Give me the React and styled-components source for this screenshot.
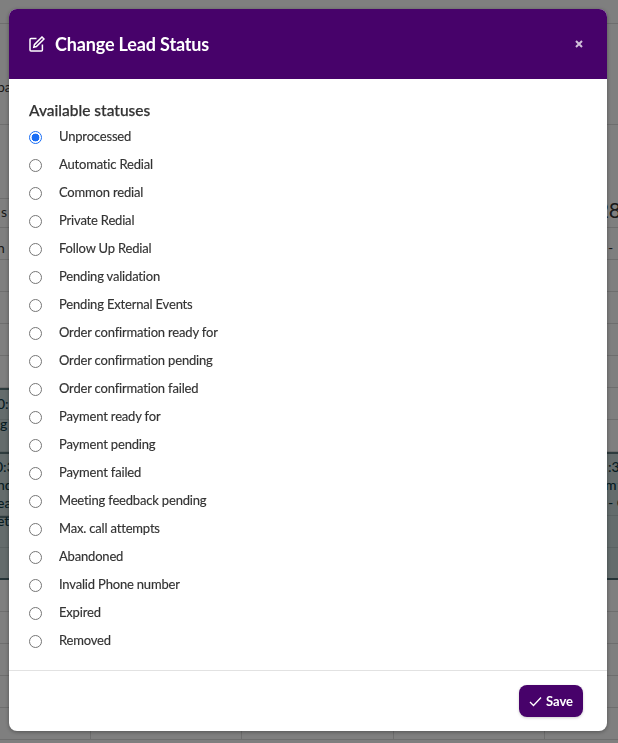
import React from 'react';
import styled, { createGlobalStyle } from 'styled-components';

const GlobalStyle = createGlobalStyle`
    html, body {
        margin: 0;
        padding: 0;
        height: 100%;
        overflow: hidden;
        background: #fff;
        font-family: 'Lato', 'Open Sans', sans-serif;
    }
`;

const statuses = [
    'Unprocessed',
    'Automatic Redial',
    'Common redial',
    'Private Redial',
    'Follow Up Redial',
    'Pending validation',
    'Pending External Events',
    'Order confirmation ready for',
    'Order confirmation pending',
    'Order confirmation failed',
    'Payment ready for',
    'Payment pending',
    'Payment failed',
    'Meeting feedback pending',
    'Max. call attempts',
    'Abandoned',
    'Invalid Phone number',
    'Expired',
    'Removed',
];

const Page = styled.div`
    height: 743px;
    overflow: hidden;
    color: #333;
    font-size: 14px;
`;

const TopRow = styled.div`
    height: ${(p) => p.$h}px;
    box-sizing: border-box;
    border-bottom: ${(p) => (p.$line ? '1px solid #ddd' : 'none')};
    display: flex;
    justify-content: space-between;
`;

const LeftPart = styled.div`
    width: 90px;
    box-sizing: border-box;
    border-bottom: ${(p) => (p.$line ? '1px solid #ddd' : 'none')};
    height: ${(p) => p.$h || 'auto'}${(p) => (p.$h ? 'px' : '')};
    padding-top: ${(p) => p.$top || 0}px;
    line-height: 18px;
`;

const Fragment = styled.div`
    margin-left: ${(p) => p.$shift || 0}px;
`;

const DayNumber = styled.div`
    font-size: 21px;
    line-height: 24px;
    padding-top: 73px;
    margin-right: -3px;
`;

const Calendar = styled.div`
    display: grid;
    grid-template-columns: 91px 151px 152px 151px 1fr;
    grid-auto-rows: 32px;
    border-top: 1px solid #ddd;
`;

const Slot = styled.div`
    box-sizing: border-box;
    border-bottom: 1px solid #ddd;
    border-right: 1px solid #ddd;
    grid-column: ${(p) => p.$col};
    grid-row: ${(p) => p.$row};
`;

const SlotLabel = styled.div`
    grid-column: ${(p) => p.$col};
    grid-row: 1;
    padding: 11px 0 0 ${(p) => p.$pad}px;
    line-height: 18px;
    white-space: nowrap;
`;

const Event = styled.div`
    grid-column: ${(p) => p.$col};
    grid-row: ${(p) => p.$row} / span ${(p) => p.$span};
    box-sizing: border-box;
    background: rgba(125, 165, 165, 0.42);
    border-top: 2px solid #5c787c;
    border-bottom: ${(p) => (p.$closed ? '2px solid #4c6a70' : 'none')};
    color: #0d3a44;
    padding: ${(p) => p.$top ?? 4}px 0 0 ${(p) => p.$pad}px;
    line-height: ${(p) => p.$lh || 18}px;
    white-space: nowrap;
    z-index: 1;
`;

const EventLine = styled.div`
    font-weight: 500;
    margin-left: ${(p) => p.$shift || 0}px;
    margin-top: ${(p) => p.$up || 0}px;
`;

const Backdrop = styled.div`
    position: fixed;
    inset: 0;
    background: rgba(0, 0, 0, 0.5);
    padding: 9px 11px 12px 9px;
    box-sizing: border-box;
    z-index: 2;
`;

const Modal = styled.div`
    height: 722px;
    background: #fff;
    border-radius: 8px;
    overflow: hidden;
    display: flex;
    flex-direction: column;
    box-shadow: 0 1px 4px rgba(0, 0, 0, 0.35);
`;

const Header = styled.div`
    height: 70px;
    flex: none;
    background: #47026a;
    color: #fff;
    display: flex;
    align-items: center;
    padding: 0 20px;
`;

const Title = styled.h5`
    margin: 0 0 0 10px;
    flex: 1;
    font-size: 18px;
    font-weight: 700;
    letter-spacing: -0.15px;
    line-height: 1;
`;

const CloseMark = styled.svg`
    width: 8px;
    height: 8px;
    margin-right: 4px;
    opacity: 0.75;
`;

const Body = styled.div`
    flex: 1;
    padding: 21px 20px 0;
`;

const Heading = styled.div`
    font-size: 15.5px;
    font-weight: 500;
    color: #333;
    line-height: 20px;
    margin-bottom: 3px;
    -webkit-text-stroke: 0.25px #333;
`;

const Option = styled.label`
    height: 28px;
    display: flex;
    align-items: center;
    font-size: 13px;
    letter-spacing: -0.18px;
    color: #333;
    -webkit-text-stroke: 0.15px #333;
`;

const OptionText = styled.span`
    margin-bottom: 2px;
`;

const Radio = styled.input`
    appearance: none;
    width: 13px;
    height: 13px;
    margin: 0 17px 0 0;
    flex: none;
    border-radius: 50%;
    border: 1px solid #767676;
    background: #fff;
    box-sizing: border-box;

    &:checked {
        border: 1px solid #1a6ef5;
        background: radial-gradient(circle, #1a6ef5 0 3.6px, #fff 4.2px);
    }
`;

const Footer = styled.div`
    height: 61px;
    flex: none;
    box-sizing: border-box;
    border-top: 1px solid #e2e2e2;
    display: flex;
    align-items: center;
    justify-content: flex-end;
    padding: 0 24px 0 0;
`;

const SaveButton = styled.button`
    width: 64px;
    height: 32px;
    border: none;
    border-radius: 8px;
    background: #47026a;
    color: #fff;
    font-family: inherit;
    font-size: 13px;
    font-weight: 700;
    display: flex;
    align-items: center;
    justify-content: center;
    gap: 4px;
    padding: 0;
    box-shadow: 0 1px 3px rgba(0, 0, 0, 0.2);
`;

// rows and columns of the calendar behind the dialog
const slotRows = Array.from({ length: 16 }, (_, i) => i + 1);
const slotCols = [1, 2, 3, 4, 5];

const App = () => {
    return (
        <>
            <GlobalStyle />
            <Page>
                <TopRow $h={24} $line />
                <TopRow $h={101} $line>
                    <LeftPart $top={54}>
                        <Fragment $shift={-3}>pa</Fragment>
                    </LeftPart>
                </TopRow>
                <TopRow $h={102}>
                    <div>
                        <LeftPart $h={74} $line />
                        <LeftPart $top={4}>
                            <Fragment $shift={1}>s</Fragment>
                        </LeftPart>
                    </div>
                    <DayNumber>28</DayNumber>
                </TopRow>
                <Calendar>
                    {slotRows.map((r) =>
                        slotCols.map((c) => <Slot key={`${r}-${c}`} $row={r} $col={c} />)
                    )}
                    <SlotLabel $col={1} $pad={0}>
                        <Fragment $shift={-3}>n -</Fragment>
                    </SlotLabel>
                    <SlotLabel $col={5} $pad={63}>-</SlotLabel>
                    <Event $col={1} $row={6} $span={2} $pad={0} $lh={20}>
                        <EventLine $shift={-3}>0:</EventLine>
                        <EventLine>g</EventLine>
                    </Event>
                    <Event $col={1} $row={8} $span={2} $pad={0}>
                        <EventLine $shift={-5}>0:3</EventLine>
                        <EventLine $shift={-3}>nd</EventLine>
                        <EventLine $shift={-3}>ea</EventLine>
                    </Event>
                    <Event $col={1} $row={10} $span={2} $pad={0} $top={0} $closed>
                        <EventLine $shift={-3} $up={-6}>et</EventLine>
                    </Event>
                    <Event $col={5} $row={8} $span={4} $pad={63} $closed>
                        <EventLine>:3</EventLine>
                        <EventLine $shift={-3}>m</EventLine>
                        <EventLine>- C</EventLine>
                    </Event>
                </Calendar>
            </Page>
            <Backdrop>
                <Modal>
                    <Header>
                        <svg width="16" height="16" viewBox="0 0 16 16" fill="none" stroke="#fff" strokeWidth="1.5">
                            <path d="M7.5 2.6H2a1 1 0 0 0-1 1V14a1 1 0 0 0 1 1h10.4a1 1 0 0 0 1-1V8.6" />
                            <path d="M5.4 8.6 13 1l2 2-7.6 7.6-2.6.6z" />
                        </svg>
                        <Title>Change Lead Status</Title>
                        <CloseMark viewBox="0 0 8 8" stroke="#fff" strokeWidth="2">
                            <path d="M1 1l6 6M7 1 1 7" />
                        </CloseMark>
                    </Header>
                    <Body>
                        <Heading>Available statuses</Heading>
                        {statuses.map((s, i) => (
                            <Option key={s}>
                                <Radio type="radio" name="status" defaultChecked={i === 0} />
                                <OptionText>{s}</OptionText>
                            </Option>
                        ))}
                    </Body>
                    <Footer>
                        <SaveButton>
                            <svg width="13" height="11" viewBox="0 0 13 11" fill="none" stroke="#fff" strokeWidth="1.3">
                                <path d="M1 6l3.5 3.5L12 1.5" />
                            </svg>
                            Save
                        </SaveButton>
                    </Footer>
                </Modal>
            </Backdrop>
        </>
    );
};

export default App;
